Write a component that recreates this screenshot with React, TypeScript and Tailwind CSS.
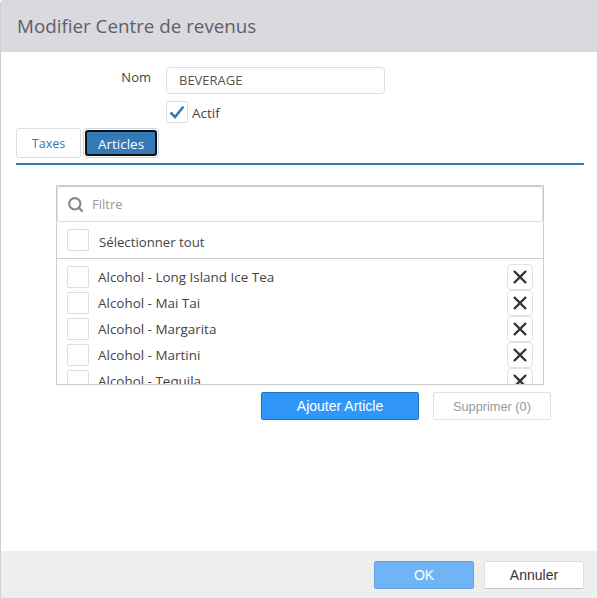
import { Search } from "lucide-react";

const ITEMS = [
  "Alcohol - Long Island Ice Tea",
  "Alcohol - Mai Tai",
  "Alcohol - Margarita",
  "Alcohol - Martini",
  "Alcohol - Tequila",
];

const box = "h-[22px] w-[22px] shrink-0 rounded-[2px] border border-[#dddddd] bg-white";

export default function App() {
  return (
    <div className="flex h-[598px] w-[597px] flex-col overflow-hidden rounded-tl-[4px] border-l border-[#d0d0d0] bg-white font-['Open_Sans',sans-serif] text-[13px] text-[#444444]">
      {/* header */}
      <div className="flex h-[52px] shrink-0 items-center bg-[#d9d9de] pl-[16px] pt-[1px]">
        <h2 className="text-[18.8px] text-[#5c6168]">Modifier Centre de revenus</h2>
      </div>

      <div className="flex-1 pl-[15px] pr-[13px]">
        {/* form */}
        <div className="ml-[1px] mt-[15px] flex">
          <label className="mt-[1px] w-[134px] text-right">Nom</label>
          <div className="ml-[15px] flex flex-col">
            <div className="flex h-[27px] w-[219px] items-center rounded-[4px] border border-[#dddddd] pl-3 text-[13px] text-[#555555]">BEVERAGE</div>
            <div className="mt-[7px] flex items-center gap-[4px]">
              <div className="flex h-[22px] w-[22px] items-center justify-center rounded-[2px] border border-[#dddddd]">
                <svg width="18" height="16" viewBox="0 0 18 16" fill="none">
                  <path d="M2.5 8.5L7 13L15.5 2.5" stroke="#337ab7" strokeWidth="2.6" />
                </svg>
              </div>
              <span className="pt-[2px] text-[13.5px]">Actif</span>
            </div>
          </div>
        </div>

        {/* tabs */}
        <div className="mt-[5px] flex h-[37px] items-start gap-[3px] border-b-2 border-[#337ab7]">
          <button className="h-[30px] w-[65px] rounded-[3px] border border-[#dddddd] pt-[3px] text-[12.5px] text-[#337ab7]">Taxes</button>
          <div className="-ml-[1px] rounded-[4px] border border-[#c9d6e4] p-[1px]">
            <button className="block h-[26px] w-[72px] rounded-[3px] border-2 border-[#111111] bg-[#337ab7] pt-[1px] text-[13.5px] text-white">Articles</button>
          </div>
        </div>

        {/* list */}
        <div className="ml-[40px] mt-[20px] h-[200px] w-[488px] overflow-hidden border border-[#cccccc]">
          <div className="flex h-[36px] items-center gap-[8px] rounded-[3px] border border-[#dddddd] border-t-[#cccccc] pl-[9px] text-[#999999]">
            <Search size={17} strokeWidth={3} className="text-[#888888]" />
            <span>Filtre</span>
          </div>
          <div className="flex h-[37px] items-center gap-[10px] border-b border-[#cccccc] pl-[10px]">
            <div className={box} />
            <span className="pt-[5px] text-[13.2px]">Sélectionner tout</span>
          </div>
          <div className="pt-[5px]">
            {ITEMS.map((item) => (
              <div key={item} className="flex h-[26px] items-center pl-[10px] pr-[10px]">
                <div className={box} />
                <span className="ml-[9px] flex-1 text-[13.45px]">{item}</span>
                <div className="flex h-[26px] w-[26px] items-center justify-center rounded-[4px] border border-[#e2e2e2]">
                  <svg width="16" height="16" viewBox="0 0 16 16" fill="none">
                    <path d="M2 2L14 14M14 2L2 14" stroke="#333333" strokeWidth="2.4" />
                  </svg>
                </div>
              </div>
            ))}
          </div>
        </div>

        {/* actions */}
        <div className="mt-[7px] flex gap-[14px] pl-[245px] font-['Liberation_Sans',sans-serif] text-[14px]">
          <button className="h-[28px] w-[158px] rounded-[2px] border border-[#1f72b8] bg-[#3097f8] text-white">Ajouter Article</button>
          <button className="h-[28px] w-[118px] rounded-[2px] border border-[#e2e2e2] text-[12.75px] text-[#999999]">Supprimer (0)</button>
        </div>
      </div>

      {/* footer */}
      <div className="flex h-[47px] shrink-0 items-start justify-end gap-[10px] bg-[#eeeeee] pr-[13px] pt-[10px] font-['Liberation_Sans',sans-serif] text-[14px]">
        <button className="h-[28px] w-[100px] rounded-[2px] border border-[#62a3de] bg-[#6fb5f6] text-white">OK</button>
        <button className="h-[28px] w-[100px] rounded-[2px] border border-[#dddddd] border-b-[#c4c4c4] bg-white text-[#333333]">Annuler</button>
      </div>
    </div>
  );
}
